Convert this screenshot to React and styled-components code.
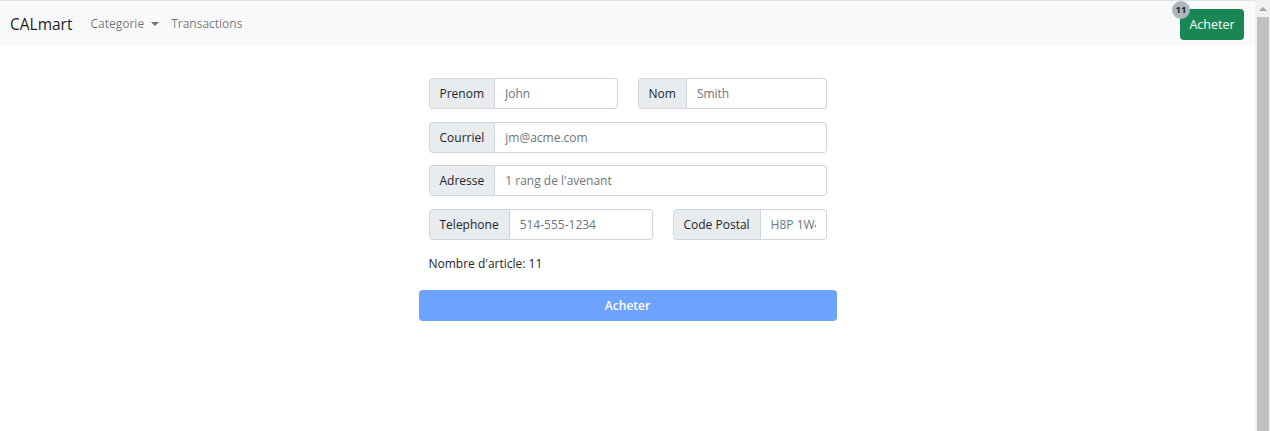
import styled, { createGlobalStyle } from 'styled-components';

const Global = createGlobalStyle`
  html, body {
    margin: 0;
    padding: 0;
  }
  body {
    font-family: "Open Sans", "Noto Sans", sans-serif;
    color: #212529;
    background: #fff;
    padding-right: 15px;
  }
  * { box-sizing: border-box; }
`;

/* stand-in for the browser's classic vertical scrollbar */
const ScrollTrack = styled.div`
  position: fixed;
  top: 0;
  right: 0;
  bottom: 0;
  width: 15px;
  background: #f1f1f1;
  display: flex;
  flex-direction: column;
  align-items: center;
`;

const ScrollArrow = styled.div`
  height: 17px;
  display: flex;
  align-items: center;
  justify-content: center;
  &::before {
    content: '';
    border-bottom: 4px solid #a3a3a3;
    border-left: 4px solid transparent;
    border-right: 4px solid transparent;
  }
`;

const ScrollThumb = styled.div`
  flex: 1;
  width: 12px;
  margin-left: 1px;
  background: #c1c1c1;
`;

const Nav = styled.nav`
  display: flex;
  align-items: center;
  height: 46px;
  padding: 0 11px 0 10px;
  background: #f8f9fa;
  border-top: 1px solid #dee2e6;
`;

const Brand = styled.a`
  font-size: 15.5px;
  color: rgba(0, 0, 0, 0.9);
  margin-right: 18px;
`;

const NavLink = styled.a`
  font-size: 12px;
  color: rgba(0, 0, 0, 0.55);
  margin-right: 12px;
  display: flex;
  align-items: center;
`;

const Caret = styled.span`
  display: inline-block;
  margin-left: 7px;
  border-top: 4.5px solid rgba(0, 0, 0, 0.55);
  border-left: 4.5px solid transparent;
  border-right: 4.5px solid transparent;
`;

const Spacer = styled.div`
  flex: 1;
`;

const CartButton = styled.button`
  position: relative;
  height: 31px;
  width: 64px;
  padding: 0;
  margin-top: 1px;
  border: none;
  border-radius: 4px;
  background: #198754;
  color: #fff;
  font-family: inherit;
  font-size: 12.5px;
`;

const Badge = styled.span`
  position: absolute;
  left: -8px;
  top: -8px;
  width: 18px;
  height: 18px;
  border-radius: 50%;
  background: #adb5bd;
  color: #212529;
  font-size: 9.5px;
  font-weight: 700;
  display: flex;
  align-items: center;
  justify-content: center;
`;

const Main = styled.main`
  width: 418px;
  margin: 32px auto 0;
`;

const Row = styled.div`
  display: grid;
  grid-template-columns: ${p => p.$cols || 'minmax(0, 1fr)'};
  margin-bottom: ${p => p.$mb || 12.67}px;
`;

const Col = styled.div`
  padding: 0 10px;
  min-width: 0;
`;

const Group = styled.div`
  display: flex;
  height: 31px;
`;

const Addon = styled.span`
  display: flex;
  align-items: center;
  padding: 0 10px;
  background: #e9ecef;
  border: 1px solid #ced4da;
  border-radius: 4px 0 0 4px;
  font-size: 12px;
  white-space: nowrap;
`;

const Input = styled.input`
  flex: 1;
  width: 0;
  min-width: 0;
  border: 1px solid #ced4da;
  border-left: none;
  border-radius: 0 4px 4px 0;
  padding: 0 10px;
  font-family: inherit;
  font-size: 12px;
  color: #212529;
  outline: none;
  &::placeholder {
    color: #6c757d;
  }
`;

const Count = styled.p`
  margin: 0 0 16px 10px;
  font-size: 12px;
  line-height: 20px;
`;

const Submit = styled.button`
  width: 100%;
  height: 31px;
  border: none;
  border-radius: 4px;
  background: #6ea2ff;
  color: #fff;
  font-family: inherit;
  font-size: 12px;
  font-weight: 600;
`;

function Field({ label, placeholder }) {
  return (
    <Group>
      <Addon>{label}</Addon>
      <Input placeholder={placeholder} />
    </Group>
  );
}

const half = 'minmax(0, 1fr) minmax(0, 1fr)';
const wideNarrow = 'minmax(0, 244fr) minmax(0, 174fr)';

export default function App() {
  return (
    <>
      <Global />
      <Nav>
        <Brand>CALmart</Brand>
        <NavLink>Categorie<Caret /></NavLink>
        <NavLink>Transactions</NavLink>
        <Spacer />
        <CartButton>
          <Badge>11</Badge>
          Acheter
        </CartButton>
      </Nav>
      <Main>
        <Row $cols={half}>
          <Col><Field label="Prenom" placeholder="John" /></Col>
          <Col><Field label="Nom" placeholder="Smith" /></Col>
        </Row>
        <Row>
          <Col><Field label="Courriel" placeholder="jm@acme.com" /></Col>
        </Row>
        <Row>
          <Col><Field label="Adresse" placeholder="1 rang de l'avenant" /></Col>
        </Row>
        <Row $cols={wideNarrow} $mb={14}>
          <Col><Field label="Telephone" placeholder="514-555-1234" /></Col>
          <Col><Field label="Code Postal" placeholder="H8P 1W4" /></Col>
        </Row>
        <Count>Nombre d'article: 11</Count>
        <Submit>Acheter</Submit>
      </Main>
      <ScrollTrack>
        <ScrollArrow />
        <ScrollThumb />
      </ScrollTrack>
    </>
  );
}
